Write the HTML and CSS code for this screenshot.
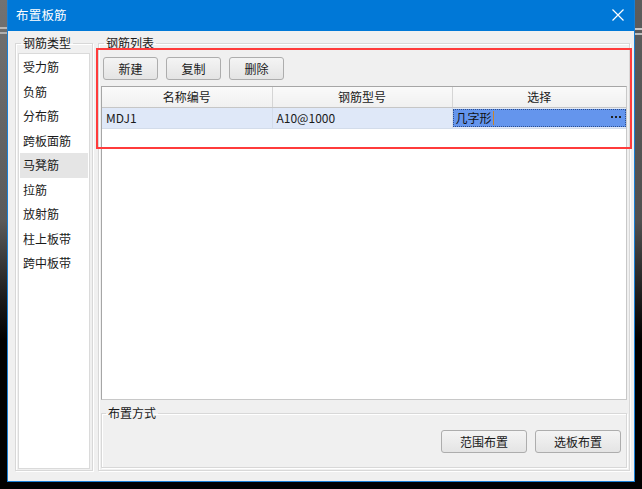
FILE: index.html
```html
<!DOCTYPE html>
<html lang="zh">
<head>
<meta charset="utf-8">
<title>布置板筋</title>
<link rel="stylesheet" href="styles.css">
</head>
<body>
<div class="strip strip-left"></div>
<div class="window">
  <div class="titlebar">
    <span class="title">布置板筋</span>
    <svg class="close" width="12" height="12" viewBox="0 0 12 12"><path d="M0.5 0.5 L11.5 11.5 M11.5 0.5 L0.5 11.5" stroke="#fff" stroke-width="1.2" fill="none"/></svg>
  </div>
  <div class="content">
    <fieldset class="group group-types">
      <legend>钢筋类型</legend>
      <ul class="list">
        <li>受力筋</li>
        <li>负筋</li>
        <li>分布筋</li>
        <li>跨板面筋</li>
        <li class="selected">马凳筋</li>
        <li>拉筋</li>
        <li>放射筋</li>
        <li>柱上板带</li>
        <li>跨中板带</li>
      </ul>
    </fieldset>
    <fieldset class="group group-list">
      <legend>钢筋列表</legend>
      <div class="toolbar">
        <button class="btn">新建</button>
        <button class="btn">复制</button>
        <button class="btn">删除</button>
      </div>
      <div class="grid">
        <table>
          <thead>
            <tr><th class="c1">名称编号</th><th class="c2">钢筋型号</th><th class="c3">选择</th></tr>
          </thead>
          <tbody>
            <tr class="row-active">
              <td>MDJ1</td>
              <td>A10@1000</td>
              <td class="pick"><div class="pick-inner"><span>几字形<span class="caret"></span></span><svg class="dots" width="11" height="3" viewBox="0 0 11 3"><rect x="0" y="0" width="2" height="2" fill="#222"/><rect x="4" y="0" width="2" height="2" fill="#222"/><rect x="8" y="0" width="2" height="2" fill="#222"/></svg></div></td>
            </tr>
          </tbody>
        </table>
      </div>
      <fieldset class="group group-place">
        <legend>布置方式</legend>
        <div class="place-actions">
          <button class="btn btn-wide">范围布置</button>
          <button class="btn btn-wide">选板布置</button>
        </div>
      </fieldset>
    </fieldset>
    <div class="highlight"></div>
  </div>
</div>
<div class="strip strip-right"></div>
</body>
</html>
```
FILE: styles.css
```css
* { box-sizing: border-box; }
html, body { margin: 0; padding: 0; }
body {
  width: 642px;
  height: 489px;
  background: #000;
  display: flex;
  align-items: flex-start;
  font-family: "Noto Sans CJK SC", "Microsoft YaHei", sans-serif;
  font-size: 12px;
  color: #1a1a1a;
  overflow: hidden;
}
.strip { width: 7px; height: 482px; }
.strip-left {
  background:
    linear-gradient(to bottom, transparent 27px, #b8b8b8 27px, #b8b8b8 29px, transparent 29px, transparent 32px, #b0b0b0 32px, #b0b0b0 34px, transparent 34px),
    linear-gradient(to bottom, #727272 0, #5a5a5a 220px, #1a1a1a 300px, #000 340px);
}
.strip-right {
  background:
    linear-gradient(to bottom, transparent 28px, #c8c8c8 28px, #c8c8c8 30px, transparent 30px, transparent 33px, #bcbcbc 33px, #bcbcbc 35px, transparent 35px),
    linear-gradient(to bottom, #5c5c5c 0, #505050 220px, #1a1a1a 300px, #000 340px);
}
.window {
  width: 628px;
  height: 482px;
  border: 1px solid #1a7fd4;
  border-top: 0;
  background: #f0f0f0;
  display: flex;
  flex-direction: column;
}
.titlebar {
  height: 31px;
  background: #0078d7;
  display: flex;
  align-items: center;
  justify-content: space-between;
  padding: 0 10px 2px 8px;
  color: #fff;
  flex: none;
}
.title { font-size: 12.5px; letter-spacing: 0.2px; }
.content {
  position: relative;
  flex: 1;
  display: flex;
  gap: 5px;
  padding: 4px 4px 11px 7px;
}
.group {
  margin: 0;
  min-width: 0;
  border: 1px solid #d8d8d8;
  box-shadow: inset 1px 1px 0 #fff, 1px 1px 0 #fff;
  display: flex;
  flex-direction: column;
}
.group legend {
  padding: 0 2px;
  line-height: 16px;
  height: 16px;
  font-size: 12px;
  color: #1a1a1a;
}
.group-types {
  width: 78px;
  padding: 2px 2px 1px 2px;
}
.group-types legend { margin-left: 3px; }
.list {
  list-style: none;
  margin: 0;
  padding: 1px 1px 0 1px;
  flex: 1;
  background: #fff;
  border: 1px solid #dadada;
}
.list li {
  height: 24.5px;
  line-height: 24px;
  padding-left: 3px;
  white-space: nowrap;
}
.list li.selected { background: #e5e5e5; }
.group-list {
  flex: 1;
  padding: 6px 2px 2px 2px;
}
.group-list legend { margin-left: 3px; }
.toolbar {
  display: flex;
  gap: 8px;
  padding-left: 2px;
}
.btn {
  font-family: inherit;
  font-size: 12px;
  color: #1a1a1a;
  width: 55px;
  height: 23px;
  padding: 0;
  border: 1px solid #adadad;
  border-radius: 3px;
  background: linear-gradient(to bottom, #f4f4f4, #e4e4e4);
}
.btn-wide { width: 86px; height: 23px; }
.grid {
  margin-top: 6px;
  height: 314px;
  background: #fff;
  border: 1px solid #a6a6a6;
  border-right-color: #c8c8c8;
  border-bottom-color: #c8c8c8;
}
table {
  width: 100%;
  border-collapse: collapse;
  table-layout: fixed;
}
th {
  height: 20px;
  font-weight: normal;
  text-align: center;
  background: linear-gradient(to bottom, #fafafa, #f0f0f0);
  border-right: 1px solid #d5d5d5;
  border-bottom: 1px solid #c6c6c6;
  padding: 0;
}
th.c1 { width: 170px; }
th.c2 { width: 180px; }
th.c3 { border-right: 0; }
td {
  height: 20px;
  padding: 0 0 0 4px;
  background: #dfe8f8;
  border-right: 1px solid #d3dcea;
  border-bottom: 1px solid #d3dcea;
  white-space: nowrap;
}
td.pick { padding: 1px 0 1px 0; border-right: 0; }
.pick-inner {
  height: 18px;
  background: #6495ed;
  border: 1px dotted #2d4f8f;
  display: flex;
  align-items: center;
  justify-content: space-between;
  padding: 0 3px 0 2px;
  color: #111;
}
.caret {
  display: inline-block;
  width: 1px;
  height: 14px;
  background: #c8852a;
  vertical-align: -2px;
  margin-left: 1px;
}
.dots { display: block; }
.group-place {
  margin-top: 5px;
  padding: 9px 5px 14px 2px;
}
.group-place legend { margin-left: 2px; }
.place-actions {
  display: flex;
  justify-content: flex-end;
  gap: 8px;
  padding-right: 0;
}
.highlight {
  position: absolute;
  left: 88px;
  top: 17px;
  width: 536px;
  height: 101px;
  border: 2px solid #ff3b3b;
  pointer-events: none;
}
```
